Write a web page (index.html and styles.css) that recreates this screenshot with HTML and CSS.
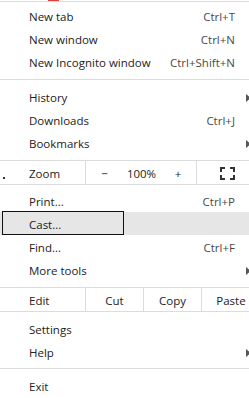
FILE: index.html
```html
<!DOCTYPE html>
<html lang="en">
<head>
    <meta charset="UTF-8">
    <meta name="viewport" content="width=device-width, initial-scale=1.0">
    <title>Menu</title>
    <link rel="stylesheet" href="styles.css">
</head>
<body>
    <div class="topbar"><span class="tab-mark"></span></div>

    <div class="menu">
        <div class="item"><span class="label">New tab</span><span class="accel">Ctrl+T</span><span class="sub"></span></div>
        <div class="item"><span class="label">New window</span><span class="accel">Ctrl+N</span><span class="sub"></span></div>
        <div class="item"><span class="label">New Incognito window</span><span class="accel">Ctrl+Shift+N</span><span class="sub"></span></div>

        <div class="sep"></div>

        <div class="item"><span class="label">History</span><span class="sub"><i class="arrow"></i></span></div>
        <div class="item"><span class="label">Downloads</span><span class="accel">Ctrl+J</span><span class="sub"></span></div>
        <div class="item"><span class="label">Bookmarks</span><span class="sub"><i class="arrow"></i></span></div>

        <div class="sep tight"></div>

        <div class="split zoom-row">
            <div class="cell head"><span class="dot"></span><span class="head-label">Zoom</span></div>
            <div class="cell btn">&minus;</div>
            <div class="cell btn">100%</div>
            <div class="cell btn last">+</div>
            <div class="cell fullscreen">
                <svg width="15" height="13" viewBox="0 0 15 13">
                    <path d="M1 5V1H5M10 1H14V5M1 8V12H5M10 12H14V8" fill="none" stroke="#333" stroke-width="2"/>
                </svg>
            </div>
        </div>

        <div class="item after-zoom"><span class="label">Print...</span><span class="accel">Ctrl+P</span><span class="sub"></span></div>
        <div class="item active"><span class="label">Cast...</span><span class="sub"></span></div>
        <div class="item"><span class="label">Find...</span><span class="accel">Ctrl+F</span><span class="sub"></span></div>
        <div class="item"><span class="label">More tools</span><span class="sub"><i class="arrow"></i></span></div>

        <div class="sep tight"></div>

        <div class="split edit-row">
            <div class="cell head"><span class="head-label">Edit</span></div>
            <div class="cell wide">Cut</div>
            <div class="cell wide">Copy</div>
            <div class="cell wide last">Paste</div>
        </div>

        <div class="item after-edit"><span class="label">Settings</span><span class="sub"></span></div>
        <div class="item"><span class="label">Help</span><span class="sub"><i class="arrow"></i></span></div>

        <div class="sep last-sep"></div>

        <div class="item"><span class="label">Exit</span><span class="sub"></span></div>
    </div>
</body>
</html>
```

FILE: styles.css
```css
html, body {
    margin: 0;
    overflow: hidden;
    background-color: #ffffff;
}
body {
    font-family: "Open Sans", "Noto Sans", sans-serif;
    font-size: 11.5px;
    color: #222;
}
.topbar {
    height: 1px;
    border-bottom: 1px solid #dcdcdc;
}
.tab-mark {
    display: block;
    margin-left: 48px;
    width: 11px;
    height: 1px;
    background-color: #e0403a;
}
.menu {
    width: 260px;
    padding-top: 2px;
}
.item {
    display: flex;
    align-items: center;
    box-sizing: border-box;
    height: 23px;
    padding: 2px 0 0 29px;
    position: relative;
}
.label {
    flex: 1;
    white-space: nowrap;
}
.accel {
    color: #4a4a4a;
    white-space: nowrap;
}
.sub {
    width: 14px;
    margin-left: 11px;
    display: flex;
    align-items: center;
}
.arrow {
    width: 0;
    height: 0;
    border-top: 4px solid transparent;
    border-bottom: 4px solid transparent;
    border-left: 5px solid #555;
}
.sep {
    height: 1px;
    background-color: #dcdcdc;
    margin: 6px 0 5px;
}
.sep.tight {
    margin-bottom: 0;
}
.sep.last-sep {
    margin-top: 5px;
}
.item.active {
    background-color: #e6e6e6;
}
/* keyboard focus ring drawn over the row */
.item.active::after {
    content: "";
    position: absolute;
    left: 2px;
    top: -1px;
    width: 120px;
    height: 22px;
    border: 1px solid #111;
}
.after-zoom {
    margin-top: 4px;
}
.after-edit {
    margin-top: 5px;
}

/* split rows: Zoom and Edit */
.split {
    display: flex;
    height: 23px;
    border-bottom: 1px solid #dcdcdc;
}
.cell {
    display: flex;
    align-items: center;
    justify-content: center;
    white-space: nowrap;
    padding-top: 1px;
    color: #222;
}
.cell.head {
    width: 85px;
    justify-content: flex-start;
    border-right: 1px solid #dcdcdc;
}
.zoom-row .cell.head {
    padding-left: 3px;
    width: 82px;
}
.head-label {
    padding-left: 29px;
}
.zoom-row .head-label {
    padding-left: 24px;
}
.dot {
    width: 2px;
    height: 2px;
    background-color: #333;
    align-self: flex-end;
    margin-bottom: 5px;
}
.cell.btn {
    width: 37px;
}
.cell.btn.last {
    width: 36px;
    border-right: 1px solid #dcdcdc;
}
.cell.fullscreen {
    flex: 1;
    justify-content: flex-end;
    padding-right: 25px;
}
.cell.wide {
    width: 57px;
    border-right: 1px solid #dcdcdc;
}
.cell.wide.last {
    width: 58px;
    border-right: none;
}
```
